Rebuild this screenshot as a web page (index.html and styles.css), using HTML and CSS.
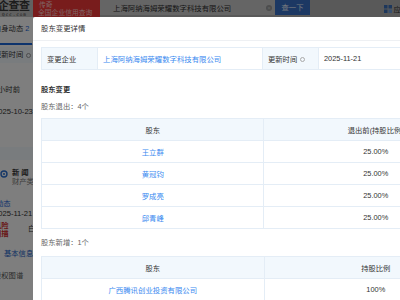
FILE: index.html
```html
<!DOCTYPE html>
<html lang="zh-CN">
<head>
<meta charset="utf-8">
<title>股东变更详情</title>
<link rel="stylesheet" href="styles.css">
</head>
<body>
<div class="page">
  <header class="topbar">
    <div class="logo">
      <div class="logo-main">企查查</div>
      <div class="logo-sub">Qcc.com</div>
    </div>
    <div class="promo">
      <div class="promo-1">传奇</div>
      <div class="promo-2">全国企业信用查询</div>
    </div>
    <div class="search">
      <span class="search-text">上海阿纳海姆荣耀数字科技有限公司</span>
      <span class="clear">×</span>
    </div>
    <div class="search-btn">查一下</div>
    <div class="spacer"></div>
    <div class="app">
      <svg class="app-icon" viewBox="0 0 8 8" width="8" height="8"><rect x="0" y="0" width="3.5" height="3.5" fill="#3b6fb8"/><rect x="4.5" y="0" width="3.5" height="3.5" fill="#3b6fb8"/><rect x="0" y="4.5" width="3.5" height="3.5" fill="#3b6fb8"/><rect x="4.5" y="4.5" width="3.5" height="3.5" fill="#6fa0e0"/></svg>
      <span class="app-text">应用</span>
    </div>
  </header>
  <aside class="side">
    <div class="tab"><span class="tab-label">自身动态 <b>2</b></span></div>
    <div class="side-th">更新时间 <i class="dot"></i></div>
    <div class="side-time">1小时前</div>
    <div class="side-date">2025-10-23</div>
    <div class="side-band"></div>
    <div class="side-news">
      <svg class="news-icon" viewBox="0 0 8 8" width="8" height="8"><circle cx="4" cy="4" r="3" fill="none" stroke="#2b6fd0" stroke-width="1.4"/><circle cx="4" cy="4" r="1" fill="#2b6fd0"/></svg>
      <div class="news-text"><div class="news-title">新 闻</div><div class="news-sub">财产类</div></div>
    </div>
    <div class="side-blue">动态</div>
    <div class="side-date2">2025-11-21</div>
    <div class="side-risk"><div class="risk-red">风险<br>扫描</div><div class="risk-white">白</div></div>
    <div class="side-basic">基本信息</div>
    <div class="side-graph">股权图谱</div>
  </aside>
</div>
<div class="overlay"></div>
<div class="modal">
  <div class="modal-head">股东变更详情</div>
  <div class="modal-body">
    <table class="info">
      <tr>
        <td class="lbl lbl-1">变更企业</td>
        <td class="val val-1"><span class="link">上海阿纳海姆荣耀数字科技有限公司</span></td>
        <td class="lbl lbl-2">更新时间 <i class="q"></i></td>
        <td class="val">2025-11-21</td>
      </tr>
    </table>
    <div class="sec-title">股东变更</div>
    <div class="sub-title">股东退出：4个</div>
    <table class="grid">
      <thead><tr><th class="c1">股东</th><th class="c2">退出前(持股比例)</th></tr></thead>
      <tbody>
        <tr><td><span class="link">王立群</span></td><td>25.00%</td></tr>
        <tr><td><span class="link">黄冠钧</span></td><td>25.00%</td></tr>
        <tr><td><span class="link">罗成亮</span></td><td>25.00%</td></tr>
        <tr><td><span class="link">邱青峰</span></td><td>25.00%</td></tr>
      </tbody>
    </table>
    <div class="sub-title sub-2">股东新增：1个</div>
    <table class="grid grid-2">
      <thead><tr><th class="c1">股东</th><th class="c2">持股比例</th></tr></thead>
      <tbody>
        <tr><td><span class="link">广西腾讯创业投资有限公司</span></td><td>100%</td></tr>
      </tbody>
    </table>
  </div>
</div>
</body>
</html>
```
FILE: styles.css
```css
* { box-sizing: border-box; }
html, body { margin: 0; padding: 0; }
body {
  width: 400px;
  height: 300px;
  overflow: hidden;
  background: #fff;
  font-family: "Liberation Sans", "Noto Sans CJK SC", sans-serif;
  font-size: 7.3px;
  color: #333;
  position: relative;
}

/* ---------- background page ---------- */
.page { width: 400px; height: 300px; background: #fcfcfc; }
.topbar {
  display: flex;
  align-items: flex-start;
  height: 17px;
  background: #b2b2b2;
}
.logo { width: 33px; height: 17px; overflow: hidden; background: #c2c2c2; }
.logo-main {
  margin-left: -2px;
  font-size: 11px;
  line-height: 12px;
  font-weight: bold;
  color: #3a3a3a;
  letter-spacing: -0.5px;
  white-space: nowrap;
}
.logo-sub {
  font-family: "DejaVu Sans Mono", monospace;
  font-size: 4.4px;
  line-height: 5px;
  letter-spacing: 0.9px;
  color: #333;
  padding-left: 2px;
  white-space: nowrap;
}
.promo {
  width: 67px;
  height: 17px;
  background: #f03838;
  color: #ffc8c8;
  padding: 1px 0 0 6px;
  font-size: 6.8px;
  line-height: 8px;
  white-space: nowrap;
}
.promo-2 { margin-left: -1px; }
.search {
  width: 175px;
  height: 15px;
  background: #cacaca;
  display: flex;
  align-items: center;
  padding-left: 13px;
  padding-right: 3px;
}
.search-text { flex: 1; font-size: 7.4px; color: #2e2e2e; white-space: nowrap; }
.clear {
  width: 6px; height: 6px; border-radius: 50%;
  background: #9a9a9a; color: #cacaca;
  font-size: 6px; line-height: 6px; text-align: center;
}
.search-btn {
  width: 35px;
  height: 15px;
  background: #3870c6;
  color: #e6eefa;
  font-size: 7.3px;
  line-height: 15px;
  text-align: center;
}
.spacer { flex: 1; }
.app { display: flex; align-items: center; gap: 1px; height: 17px; margin-right: -8px; }
.app-icon { display: block; }
.app-text { font-size: 7.3px; color: #333; }

.side { width: 120px; margin-left: -6px; }
.tab {
  height: 28px;
  border-bottom: 1px solid #dde5ee;
  padding-top: 7px;
}
.tab-label {
  display: inline-block;
  height: 21px;
  border-bottom: 2px solid #1a66d8;
  padding-right: 3px;
  line-height: 10px;
  font-size: 7.3px;
  color: #333;
}
.tab-label b { color: #1a66d8; font-weight: normal; }
.side-th {
  margin-top: 2px;
  height: 16px;
  background: #f3f8fd;
  line-height: 16px;
  white-space: nowrap;
}
.dot {
  display: inline-block; width: 5px; height: 5px; border-radius: 50%;
  border: 0.8px solid #999; vertical-align: -0.5px; margin-left: 1px;
}
.side-time { margin-top: 22px; line-height: 10px; }
.side-date { margin-top: 12px; line-height: 10px; font-size: 7.6px; }
.side-band { margin-top: 30px; height: 13px; background: #f3f8fd; }
.side-news { display: flex; gap: 4px; margin-top: 8px; padding-left: 6px; }
.news-icon { margin-top: 2px; }
.news-title { line-height: 9px; font-weight: bold; }
.news-sub { line-height: 9px; color: #777; }
.side-blue { margin-top: 13px; padding-left: 2px; color: #1a66d8; line-height: 9px; }
.side-date2 { margin-top: 1px; line-height: 10px; font-size: 7.6px; }
.side-risk { display: flex; margin-top: 3px; }
.risk-red { color: #d02a2a; line-height: 8px; font-weight: bold; width: 34px; }
.risk-white { line-height: 10px; color: #333; padding-top: 2px; }
.side-basic { margin-top: 11px; padding-left: 10px; color: #1a5fc8; line-height: 10px; }
.side-graph { margin-top: 12px; line-height: 10px; color: #555; }

/* ---------- overlay + modal ---------- */
.overlay {
  position: absolute;
  inset: 0;
  background: rgba(0, 0, 0, 0.5);
}
.modal {
  position: absolute;
  left: 33px;
  top: 17px;
  width: 463px;
  height: 320px;
  background: #fff;
  border-radius: 2px;
}
.modal-head {
  height: 24px;
  line-height: 23px;
  padding-left: 8px;
  border-bottom: 1px solid #eef0f3;
  font-size: 7.4px;
  color: #333;
}
.modal-body { padding: 6px 8px 0; }

table { border-collapse: separate; border-spacing: 0; }
.info {
  width: 447px;
  border-top: 1px solid #e4edf6;
  border-left: 1px solid #e4edf6;
}
.info td {
  height: 22px;
  padding: 0 5px;
  border-right: 1px solid #e4edf6;
  border-bottom: 1px solid #e4edf6;
  white-space: nowrap;
  font-size: 7.3px;
}
.info .lbl { background: #f2f8fd; color: #333; }
.lbl-1 { width: 56px; }
.val-1 { width: 165px; padding-left: 3px; }
.lbl-2 { width: 56px; }
.info .val { font-size: 7.4px; }
.q {
  display: inline-block; width: 5px; height: 5px; border-radius: 50%;
  border: 0.7px solid #aaa; vertical-align: -0.5px; margin-left: 1px;
}
.link { color: #3a8af0; }

.sec-title {
  margin-top: 14px;
  line-height: 12px;
  font-weight: bold;
  color: #333;
}
.sub-title {
  margin-top: 5px;
  line-height: 12px;
  color: #666;
}
.sub-2 { margin-top: 8px; }

.grid {
  margin-top: 5px;
  width: 447px;
  border-top: 1px solid #e4edf6;
  border-left: 1px solid #e4edf6;
}
.grid-2 { margin-top: 7px; }
.grid th, .grid td {
  height: 22px;
  padding: 0;
  text-align: center;
  border-right: 1px solid #e4edf6;
  border-bottom: 1px solid #e4edf6;
  font-size: 7.3px;
  font-weight: normal;
  white-space: nowrap;
}
.grid th { background: #f2f8fd; color: #333; }
.grid .c1 { width: 223px; }
.grid .c2 { width: 224px; }
.grid td { font-size: 7.4px; }
```
